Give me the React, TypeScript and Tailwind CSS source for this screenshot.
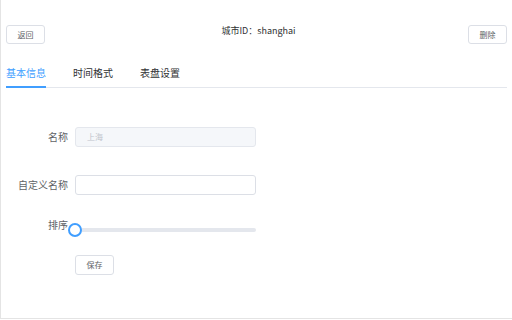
import React from "react";

export default function App() {
  return (
    <div className="w-[512px] h-[319px] border-l border-b border-[#e4e4e4] bg-white text-[#606266] font-['Noto_Sans_CJK_SC','Liberation_Sans',sans-serif] overflow-hidden">
      <div className="flex items-start justify-between pl-[5px] pr-[5px] pt-[25px]">
        <button className="w-[39px] h-[19px] border border-[#dcdfe6] rounded-[3px] text-[8px] text-[#606266] leading-none bg-white">
          返回
        </button>
        <div className="text-[9px] text-[#303133] leading-[12px] ml-[4px]">城市ID：shanghai</div>
        <button className="w-[39px] h-[19px] border border-[#dcdfe6] rounded-[3px] text-[8px] text-[#606266] leading-none bg-white">
          删除
        </button>
      </div>

      <div className="mx-[5px] mt-[18px] flex gap-[27px] border-b border-[#e4e7ed] h-[26px]">
        <div className="relative text-[10px] leading-[22px] text-[#409eff]">
          基本信息
          <div className="absolute left-0 right-0 -bottom-[1px] h-[2px] bg-[#409eff]" />
        </div>
        <div className="text-[10px] leading-[22px] text-[#303133]">时间格式</div>
        <div className="text-[10px] leading-[22px] text-[#303133]">表盘设置</div>
      </div>

      <div className="flex flex-col mt-[39px]">
        <div className="flex items-center h-[20px]">
          <div className="w-[74px] pr-[7px] text-right text-[10px] leading-none">名称</div>
          <div className="w-[181px] h-[20px] border border-[#e4e7ed] bg-[#f5f7fa] rounded-[3px] text-[8px] text-[#c0c4cc] flex items-center pl-[11px]">
            上海
          </div>
        </div>
        <div className="flex items-center h-[20px] mt-[28px]">
          <div className="w-[74px] pr-[7px] text-right text-[10px] leading-none">自定义名称</div>
          <div className="w-[181px] h-[20px] border border-[#dcdfe6] bg-white rounded-[3px]" />
        </div>
        <div className="flex items-start h-[20px] mt-[24px]">
          <div className="w-[74px] pr-[7px] text-right text-[10px] leading-[12px]">排序</div>
          <div className="relative w-[181px] h-[4px] mt-[9px] bg-[#e4e7ed] rounded-[2px]">
            <div className="absolute -left-[7px] -top-[5px] w-[14px] h-[14px] rounded-full border-2 border-[#409eff] bg-white" />
          </div>
        </div>
        <div className="flex mt-[16px] pl-[74px]">
          <button className="w-[39px] h-[20px] border border-[#dcdfe6] rounded-[3px] text-[8px] text-[#606266] leading-none bg-white">
            保存
          </button>
        </div>
      </div>
    </div>
  );
}
